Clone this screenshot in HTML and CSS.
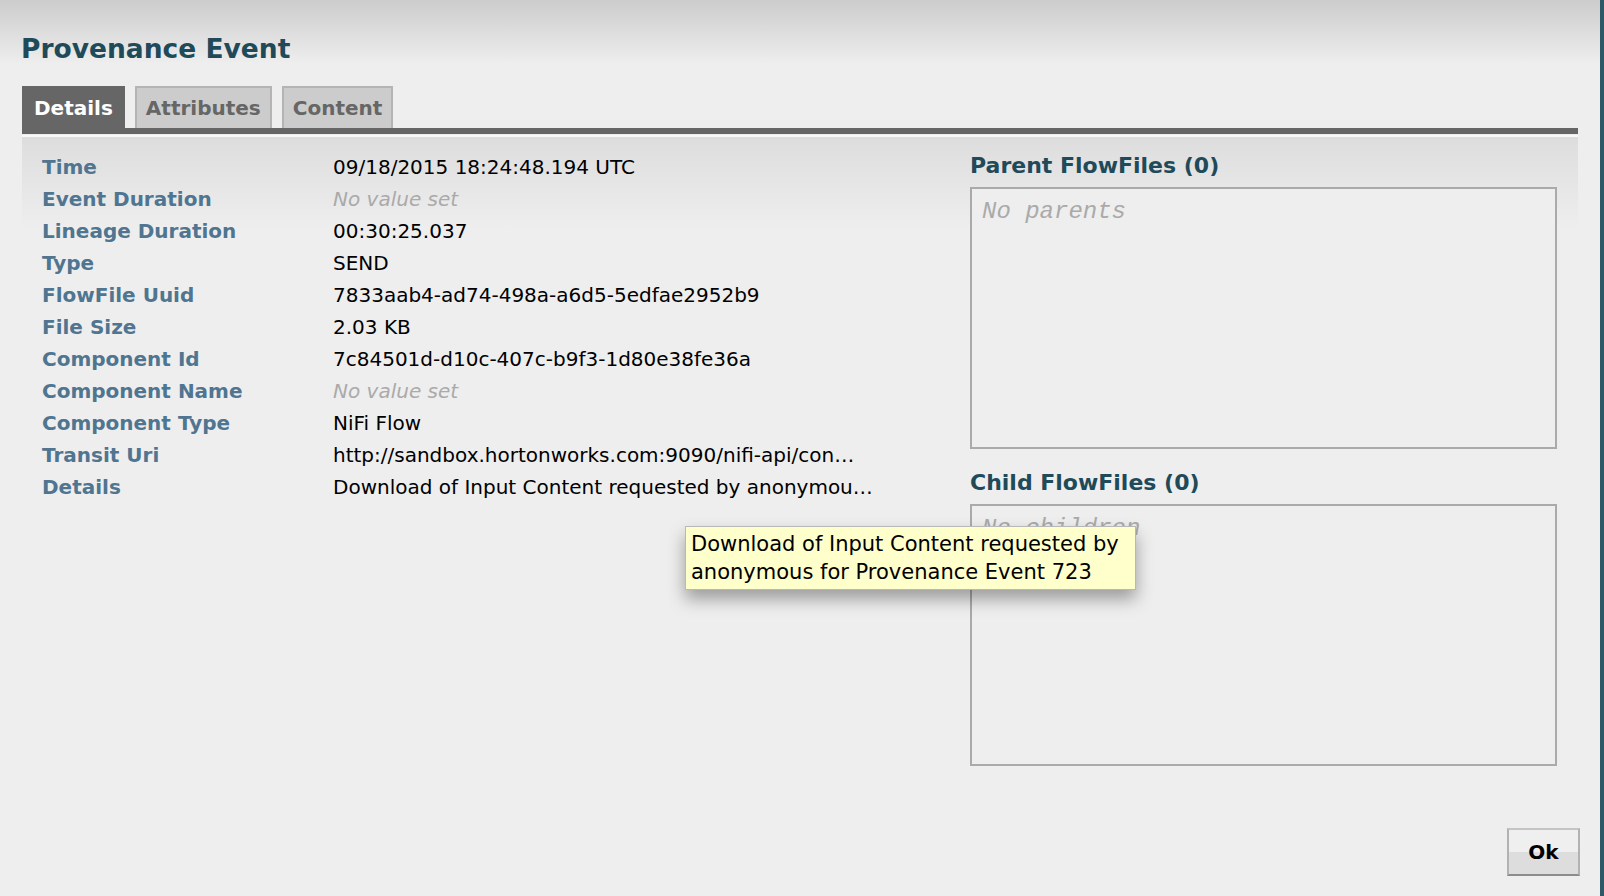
FILE: index.html
```
<!DOCTYPE html>
<html lang="en">
<head>
<meta charset="utf-8">
<title>Provenance Event</title>
<link rel="stylesheet" href="styles.css">
</head>
<body>
<div class="dialog">
  <header class="dialog-header">
    <h1 class="dialog-title">Provenance Event</h1>
  </header>
  <nav class="tabs">
    <div class="tab tab-active">Details</div>
    <div class="tab">Attributes</div>
    <div class="tab">Content</div>
  </nav>
  <main class="panel">
    <section class="details">
      <div class="label">Time</div><div class="value">09/18/2015 18:24:48.194 UTC</div>
      <div class="label">Event Duration</div><div class="value unset">No value set</div>
      <div class="label">Lineage Duration</div><div class="value">00:30:25.037</div>
      <div class="label">Type</div><div class="value">SEND</div>
      <div class="label">FlowFile Uuid</div><div class="value">7833aab4-ad74-498a-a6d5-5edfae2952b9</div>
      <div class="label">File Size</div><div class="value">2.03 KB</div>
      <div class="label">Component Id</div><div class="value">7c84501d-d10c-407c-b9f3-1d80e38fe36a</div>
      <div class="label">Component Name</div><div class="value unset">No value set</div>
      <div class="label">Component Type</div><div class="value">NiFi Flow</div>
      <div class="label">Transit Uri</div><div class="value">http://sandbox.hortonworks.com:9090/nifi-api/con…</div>
      <div class="label">Details</div><div class="value">Download of Input Content requested by anonymou…</div>
    </section>
    <section class="lineage">
      <h2 class="lineage-title">Parent FlowFiles (0)</h2>
      <div class="lineage-box"><span class="empty">No parents</span></div>
      <h2 class="lineage-title lineage-title-child">Child FlowFiles (0)</h2>
      <div class="lineage-box"><span class="empty">No children</span></div>
    </section>
  </main>
  <footer class="dialog-footer">
    <button class="btn-ok" type="button">Ok</button>
  </footer>
  <div class="tooltip">Download of Input Content requested by anonymous for Provenance Event 723</div>
</div>
</body>
</html>
```
FILE: styles.css
```
* { box-sizing: border-box; }

html, body {
  margin: 0;
  padding: 0;
  background: #eeeeee;
  font-family: "DejaVu Sans", Verdana, sans-serif;
}

.dialog {
  position: relative;
  display: flex;
  flex-direction: column;
  height: 896px;
  border-right: 4px solid #2f5867;
  background: #eeeeee;
}

.dialog-header {
  height: 64px;
  padding: 33px 0 0 21px;
  background: linear-gradient(#cccccc, #eeeeee);
}

.dialog-title {
  margin: 0;
  font-size: 26.5px;
  line-height: 31px;
  font-weight: bold;
  color: #1f4a59;
}

.tabs {
  display: flex;
  gap: 10px;
  margin: 22px 22px 0 22px;
  border-bottom: 6px solid #666666;
}

.tab {
  height: 42px;
  padding: 9px 9px 0 9px;
  border: 2px solid #b4b4b4;
  border-bottom: none;
  background: #cccccc;
  color: #666666;
  font-size: 20px;
  line-height: 23px;
  font-weight: bold;
}

.tab-active {
  padding: 9px 10px 0 10px;
  background: #666666;
  border-color: #666666;
  color: #ffffff;
}

.panel {
  flex: 1;
  display: grid;
  grid-template-columns: 1fr 587px;
  align-items: start;
  margin: 1px 22px 0 22px;
  padding: 14px 21px 0 20px;
  border-top: 2px solid #f8f8f8;
  background: linear-gradient(#dddddd, #eeeeee 92px);
}

.details {
  display: grid;
  grid-template-columns: 291px 1fr;
  grid-auto-rows: 32px;
  font-size: 20px;
  line-height: 32px;
}

.label {
  font-weight: bold;
  color: #4f7590;
  white-space: nowrap;
}

.value {
  color: #000000;
  white-space: nowrap;
  overflow: hidden;
}

.value.unset {
  color: #aaaaaa;
  font-style: italic;
}

.lineage {
  padding-top: 3px;
}

.lineage-title {
  margin: 0 0 9px 0;
  font-size: 22px;
  line-height: 24px;
  font-weight: bold;
  color: #1f4a59;
}

.lineage-title-child {
  margin-top: 22px;
}

.lineage-box {
  height: 262px;
  padding: 9px 10px;
  border: 2px solid #aaaaaa;
  background: #eeeeee;
}

.empty {
  font-family: "Liberation Mono", "Courier New", monospace;
  font-style: italic;
  font-size: 24px;
  line-height: 28px;
  color: #aaaaaa;
}

.dialog-footer {
  display: flex;
  justify-content: flex-end;
  padding: 0 20px 20px 0;
}

.btn-ok {
  width: 73px;
  height: 48px;
  padding: 0;
  border: 2px solid #b2b2b2;
  border-top-color: #c4c4c4;
  border-bottom-color: #8c8c8c;
  background: linear-gradient(#efefef 50%, #dddddd 50%);
  font-family: "DejaVu Sans", Verdana, sans-serif;
  font-size: 20px;
  font-weight: bold;
  color: #000000;
}

.tooltip {
  position: absolute;
  left: 685px;
  top: 526px;
  width: 451px;
  padding: 3px 5px 3px 5px;
  border: 1px solid #b8b8b8;
  background: #ffffcc;
  color: #000000;
  font-size: 21px;
  line-height: 28px;
  box-shadow: 0 9px 16px rgba(0, 0, 0, 0.35);
}
```
